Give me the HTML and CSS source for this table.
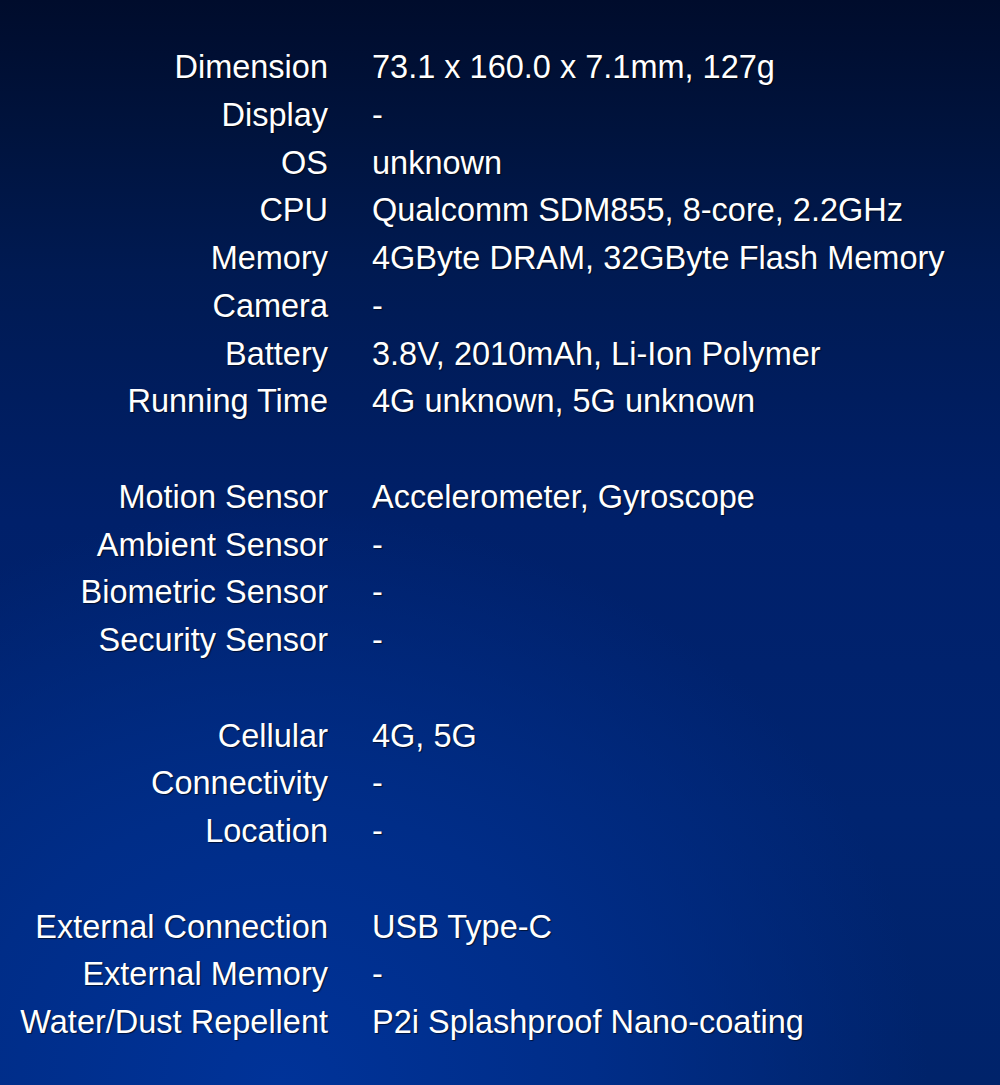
FILE: index.html
```html
<!DOCTYPE html>
<html lang="en">
<head>
<meta charset="utf-8">
<title>Specifications</title>
<link rel="stylesheet" href="styles.css">
</head>
<body>
<main class="specs">
  <dl class="group">
    <dt>Dimension</dt><dd>73.1 x 160.0 x 7.1mm, 127g</dd>
    <dt>Display</dt><dd>-</dd>
    <dt>OS</dt><dd>unknown</dd>
    <dt>CPU</dt><dd>Qualcomm SDM855, 8-core, 2.2GHz</dd>
    <dt>Memory</dt><dd>4GByte DRAM, 32GByte Flash Memory</dd>
    <dt>Camera</dt><dd>-</dd>
    <dt>Battery</dt><dd>3.8V, 2010mAh, Li-Ion Polymer</dd>
    <dt>Running Time</dt><dd>4G unknown, 5G unknown</dd>
  </dl>
  <dl class="group">
    <dt>Motion Sensor</dt><dd>Accelerometer, Gyroscope</dd>
    <dt>Ambient Sensor</dt><dd>-</dd>
    <dt>Biometric Sensor</dt><dd>-</dd>
    <dt>Security Sensor</dt><dd>-</dd>
  </dl>
  <dl class="group">
    <dt>Cellular</dt><dd>4G, 5G</dd>
    <dt>Connectivity</dt><dd>-</dd>
    <dt>Location</dt><dd>-</dd>
  </dl>
  <dl class="group">
    <dt>External Connection</dt><dd>USB Type-C</dd>
    <dt>External Memory</dt><dd>-</dd>
    <dt>Water/Dust Repellent</dt><dd>P2i Splashproof Nano-coating</dd>
  </dl>
</main>
</body>
</html>
```
FILE: styles.css
```css
html, body {
  margin: 0;
  padding: 0;
}
body {
  min-height: 1085px;
  background:
    radial-gradient(ellipse 900px 800px at 28% 100%, #003399 0%, #002d88 35%, rgba(0, 36, 112, 0) 72%),
    linear-gradient(to bottom, #000c2c 0%, #00133d 12%, #001a52 25%, #00206a 48%, #002470 75%, #00236a 100%);
  color: #ffffff;
  font-family: "Liberation Sans", Arial, sans-serif;
}
.specs {
  padding-top: 44px;
  display: flex;
  flex-direction: column;
  gap: 47.75px;
}
.group {
  margin: 0;
  display: grid;
  grid-template-columns: 328px 1fr;
  column-gap: 44px;
  font-size: 32.5px;
  line-height: 47.75px;
  text-shadow: 1px 1px 1px rgba(0, 0, 0, 0.6);
}
.group dt {
  text-align: right;
  white-space: nowrap;
}
.group dd {
  margin: 0;
  white-space: nowrap;
}
```
